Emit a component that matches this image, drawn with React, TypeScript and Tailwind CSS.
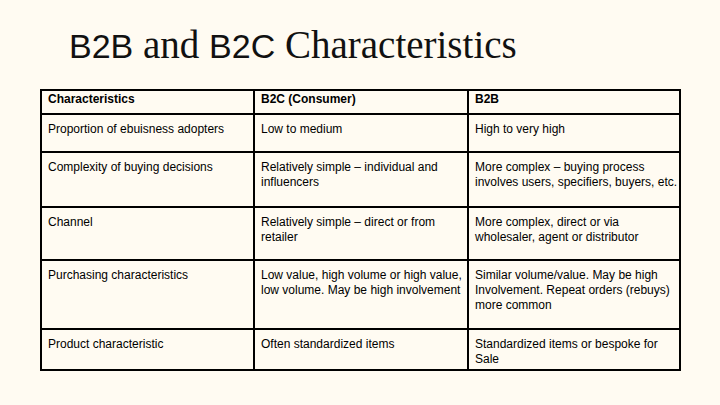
import React from "react";

const rows: { h: string; cells: string[][] }[] = [
  { h: "h-[36px]", cells: [["Proportion of ebuisness adopters"], ["Low to medium"], ["High to very high"]] },
  {
    h: "h-[53px]",
    cells: [
      ["Complexity of buying decisions"],
      ["Relatively simple – individual and", "influencers"],
      ["More complex – buying process", "involves users, specifiers, buyers, etc."],
    ],
  },
  {
    h: "h-[51px]",
    cells: [["Channel"], ["Relatively simple – direct or from", "retailer"], ["More complex, direct or via", "wholesaler, agent or distributor"]],
  },
  {
    h: "h-[67px]",
    cells: [
      ["Purchasing characteristics"],
      ["Low value, high volume or high value,", "low volume. May be high involvement"],
      ["Similar volume/value. May be high", "Involvement. Repeat orders (rebuys)", "more common"],
    ],
  },
  {
    h: "h-[39px]",
    cells: [["Product characteristic"], ["Often standardized items"], ["Standardized items or bespoke for", "Sale"]],
  },
];

export default function App() {
  return (
    <div className="w-[720px] h-[405px] bg-[#fffbf2] overflow-hidden">
      <div
        className="pt-[25px] pl-[69px] h-[65px] text-[39px] leading-[40px] text-[#111] whitespace-nowrap"
        style={{ fontFamily: '"Liberation Serif", serif' }}
      >
        <span className="text-[34px]" style={{ fontFamily: '"Liberation Sans", Arial, sans-serif' }}>
          B2B
        </span>{" "}
        and{" "}
        <span className="text-[34px]" style={{ fontFamily: '"Liberation Sans", Arial, sans-serif' }}>
          B2C
        </span>{" "}
        Characteristics
      </div>
      <div className="mt-[24px] ml-[40px] w-[641px] bg-black p-[2px]">
        <div
          className="grid grid-cols-[211px_212px_210px] gap-[2px] text-[12px] leading-[15px] text-black"
          style={{ fontFamily: '"Liberation Sans", Arial, sans-serif' }}
        >
          {["Characteristics", "B2C (Consumer)", "B2B"].map((t) => (
            <div key={t} className="h-[22px] bg-[#fffbf2] px-[6px] pt-[1px] font-bold">
              {t}
            </div>
          ))}
          {rows.map((r, i) =>
            r.cells.map((lines, j) => (
              <div key={`${i}-${j}`} className={`${r.h} bg-[#fffbf2] px-[6px] pt-[7px]`}>
                {lines.map((l, k) => (
                  <div key={k} className="whitespace-nowrap">
                    {l}
                  </div>
                ))}
              </div>
            ))
          )}
        </div>
      </div>
    </div>
  );
}
